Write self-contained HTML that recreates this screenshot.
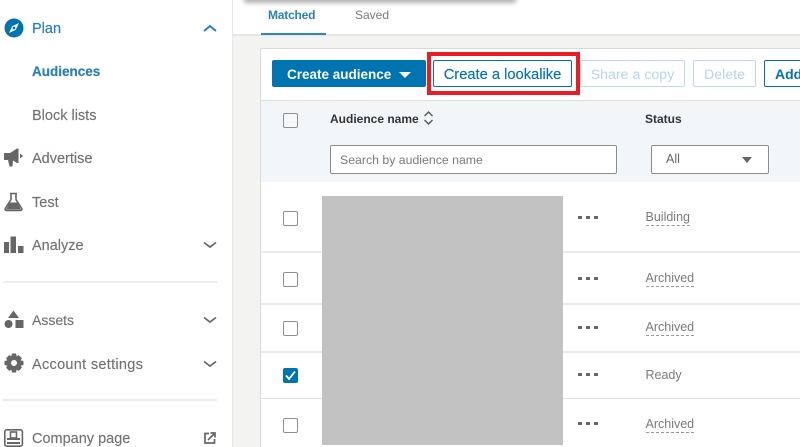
<!DOCTYPE html>
<html><head><meta charset="utf-8"><style>
html,body{margin:0;padding:0;width:800px;height:447px;overflow:hidden}
body{background:#f3f3f2;font-family:"Liberation Sans",sans-serif}
#p{position:absolute;left:0;top:0;width:800px;height:447px;overflow:hidden}
#p div,#p span,#p svg{position:absolute;white-space:nowrap}
.nav{left:32px;font-size:14.5px;line-height:20px;color:#737373;font-weight:400;-webkit-text-stroke:.15px #737373}
#p .blue{color:#2b80b9;-webkit-text-stroke:.2px #2b80b9}
.cb{left:283px;width:13px;height:13px;border:1.5px solid #8f8f8f;border-radius:2px;background:#fff}
.dots{left:578px;width:3.5px;height:3px;background:#666;box-shadow:8px 0 #666,16px 0 #666}
.st{left:645.5px;font-size:12.5px;line-height:16px;color:#7b7b7b;border-bottom:1px dashed #9a9a9a}
.rowline{left:261px;width:539px;height:1px;background:#ebebeb}
.btn{top:60px;height:27px;box-sizing:border-box;border:1px solid #0073b1;border-radius:2px;font-size:14.2px;line-height:28px;text-align:center;background:#fff;color:#0073b1}
.dis{border-color:#bcdcee;color:#b5d6e9}
.th{font-size:12px;font-weight:700;color:#333;line-height:16px}
.chev{left:203px;width:14px;height:8px}
</style></head><body><div id="p">
<div style="left:0;top:0;width:232px;height:447px;background:#fff;border-right:1px solid #e9e9e9"></div>
<div style="left:233px;top:0;width:567px;height:34px;background:#fff;border-bottom:2px solid #e6e6e6"></div>
<div style="left:246px;top:-6px;width:268px;height:6px;box-shadow:0 1px 5px 2px rgba(0,0,0,.3);background:#888"></div>

<!-- sidebar -->
<svg style="left:4px;top:18px" width="20" height="20" viewBox="0 0 20 20"><circle cx="10" cy="10" r="9.5" fill="#0073b1"/><path d="M15 5 L11.8 11.8 L5 15 L8.2 8.2Z" fill="#fff"/><circle cx="10" cy="10" r="1.4" fill="#0073b1"/></svg>
<div class="nav blue" style="top:19px">Plan</div>
<svg class="chev" style="top:24px" viewBox="0 0 14 8"><path d="M1 7 L7 2 L13 7" fill="none" stroke="#2b80b9" stroke-width="2"/></svg>
<div class="nav blue" style="top:62px;font-weight:700;font-size:13.5px">Audiences</div>
<div class="nav" style="top:106px">Block lists</div>

<svg style="left:4px;top:148px" width="20" height="20" viewBox="0 0 20 20"><path d="M0 5 H6 L13 0.5 H14.5 V15 H13 L9 12.5 L8.5 18.5 H5.5 L4 12 H0Z" fill="#666"/><path d="M16 5.5 L19 8 L16 10.5Z" fill="#666"/></svg>
<div class="nav" style="top:149px">Advertise</div>

<svg style="left:4px;top:192px" width="19" height="20" viewBox="0 0 19 20"><path d="M6 1.5 H13 M7 1.5 V7.5 L1.2 16.5 Q0.8 18.5 2.5 18.5 H16.5 Q18.2 18.5 17.8 16.5 L12 7.5 V1.5" fill="none" stroke="#666" stroke-width="1.6"/><path d="M5.5 10.5 H13.5 L17 17.5 H2Z" fill="#666"/></svg>
<div class="nav" style="top:193px">Test</div>

<svg style="left:4px;top:236px" width="20" height="18" viewBox="0 0 20 18"><rect x="0" y="6" width="5" height="11" fill="#666"/><rect x="6.5" y="0.5" width="5.5" height="16.5" fill="#666"/><rect x="14" y="10" width="5.5" height="7" fill="#666"/></svg>
<div class="nav" style="top:236px">Analyze</div>
<svg class="chev" style="top:241px" viewBox="0 0 14 8"><path d="M1 1.5 L7 6 L13 1.5" fill="none" stroke="#666" stroke-width="1.7"/></svg>

<div style="left:3px;top:281px;width:214px;height:2px;background:#ececec"></div>

<svg style="left:4px;top:310px" width="20" height="19" viewBox="0 0 20 19"><path d="M9.5 0.5 L15 8 H4Z" fill="#666"/><circle cx="4.5" cy="14" r="4" fill="#666"/><rect x="11.5" y="10" width="8" height="8" fill="#666"/></svg>
<div class="nav" style="top:310px;font-size:14px">Assets</div>
<svg class="chev" style="top:316px" viewBox="0 0 14 8"><path d="M1 1.5 L7 6 L13 1.5" fill="none" stroke="#666" stroke-width="1.7"/></svg>

<svg style="left:4px;top:353px" width="20" height="20" viewBox="0 0 20 20"><path d="M8 0.5 H12 L12.6 3.3 L14.8 2.1 L17.9 5.2 L16.7 7.4 L19.5 8 V12 L16.7 12.6 L17.9 14.8 L14.8 17.9 L12.6 16.7 L12 19.5 H8 L7.4 16.7 L5.2 17.9 L2.1 14.8 L3.3 12.6 L0.5 12 V8 L3.3 7.4 L2.1 5.2 L5.2 2.1 L7.4 3.3Z M10 7 A3 3 0 1 0 10 13 A3 3 0 1 0 10 7Z" fill="#666" fill-rule="evenodd"/></svg>
<div class="nav" style="top:355px;letter-spacing:.3px">Account settings</div>
<svg class="chev" style="top:360px" viewBox="0 0 14 8"><path d="M1 1.5 L7 6 L13 1.5" fill="none" stroke="#666" stroke-width="1.7"/></svg>

<div style="left:3px;top:399px;width:214px;height:2px;background:#ececec"></div>

<svg style="left:4px;top:429px" width="20" height="18" viewBox="0 0 20 18"><rect x="0.8" y="0.8" width="17.6" height="16.4" rx="2" fill="none" stroke="#666" stroke-width="1.6"/><rect x="6.5" y="3" width="6" height="6" fill="none" stroke="#666" stroke-width="1.6"/><rect x="3" y="9" width="13" height="2" fill="#666"/><rect x="3" y="13" width="13" height="2" fill="#666"/></svg>
<div class="nav" style="top:429px">Company page</div>
<svg style="left:204px;top:432px" width="12" height="12" viewBox="0 0 12 12"><path d="M5 1.5 H1 V11 H10.5 V7" fill="none" stroke="#666" stroke-width="1.7"/><path d="M4 8 L10 2 M6.5 1 H11 V5.5" fill="none" stroke="#666" stroke-width="1.7"/></svg>

<!-- tabs -->
<div style="left:268px;top:7px;font-size:12px;line-height:16px;color:#2b80b9;font-weight:700;letter-spacing:-.2px">Matched</div>
<div style="left:355px;top:7px;font-size:12px;line-height:16px;color:#7a7a7a">Saved</div>
<div style="left:261px;top:33px;width:65px;height:2px;background:#2f88bd"></div>

<!-- card -->
<div style="left:260px;top:48px;width:560px;height:399px;background:#fff;border:1px solid #d9d9d9;border-bottom:0;border-radius:2px 2px 0 0;box-sizing:border-box"></div>
<div style="left:261px;top:100px;width:539px;height:1px;background:#dfdfdf"></div>
<div style="left:261px;top:101px;width:539px;height:81px;background:#f3f6f8"></div>

<div class="btn" style="left:272px;width:154px;background:#0073b1;color:#fff;font-weight:700;font-size:13.5px;text-align:left;padding-left:14px;line-height:28px">Create audience</div>
<div style="left:399px;top:72px;width:0;height:0;border-left:6px solid transparent;border-right:6px solid transparent;border-top:6px solid #fff"></div>

<div style="left:427px;top:52px;width:153px;height:43px;box-sizing:border-box;border:4px solid #ed1c24"></div>
<div class="btn" style="left:433px;width:139px;font-size:14.7px;line-height:29px;-webkit-text-stroke:.15px #0073b1">Create a lookalike</div>
<div class="btn dis" style="left:580px;width:105px;line-height:29px">Share a copy</div>
<div class="btn dis" style="left:693px;width:63px;line-height:29px">Delete</div>
<div style="left:764px;top:60px;width:60px;height:27px;box-sizing:border-box;border:1px solid #0073b1;border-radius:2px;font-size:14px;line-height:27px;padding-left:10px;color:#0073b1;font-weight:700;background:#fff">Add</div>

<!-- header -->
<div class="cb" style="top:113px;background:#f7f8f9"></div>
<div class="th" style="left:330px;top:111px">Audience name</div>
<svg style="left:423px;top:110px" width="11" height="16" viewBox="0 0 11 16"><path d="M1.5 6 L5.5 2 L9.5 6 M1.5 10 L5.5 14 L9.5 10" fill="none" stroke="#555" stroke-width="1.4"/></svg>
<div class="th" style="left:645px;top:111px">Status</div>
<div style="left:330px;top:145px;width:287px;height:29px;box-sizing:border-box;background:#fff;border:1px solid #8c8c8c;border-radius:2px;font-size:12.3px;line-height:28px;padding-left:9px;color:#7a7a7a">Search by audience name</div>
<div style="left:651px;top:145px;width:118px;height:29px;box-sizing:border-box;background:#fff;border:1px solid #8c8c8c;border-radius:2px;font-size:12.5px;line-height:26px;padding-left:14px;color:#666">All</div>
<div style="left:742px;top:157px;width:0;height:0;border-left:5.5px solid transparent;border-right:5.5px solid transparent;border-top:6px solid #666"></div>

<!-- rows -->
<div class="rowline" style="top:251px;height:2px"></div>
<div class="rowline" style="top:303px;height:2px"></div>
<div class="rowline" style="top:351px;height:2px"></div>
<div class="rowline" style="top:398px;height:1px;background:#e3e3e3"></div>

<div style="left:322px;top:196px;width:241px;height:249px;background:#c2c2c2"></div>

<div class="cb" style="top:211px"></div>
<div class="cb" style="top:272px"></div>
<div class="cb" style="top:321px"></div>
<div style="left:283px;top:368px;width:15px;height:15px;background:#0073b1;border-radius:2px"></div>
<svg style="left:283px;top:368px" width="15" height="15" viewBox="0 0 15 15"><path d="M3 7.5 L6 11 L12 3.5" fill="none" stroke="#fff" stroke-width="1.8"/></svg>
<div class="cb" style="top:418px"></div>

<div class="dots" style="top:216px"></div>
<div class="dots" style="top:277px"></div>
<div class="dots" style="top:326px"></div>
<div class="dots" style="top:373px"></div>
<div class="dots" style="top:422px"></div>

<div class="st" style="top:209px">Building</div>
<div class="st" style="top:270px">Archived</div>
<div class="st" style="top:319px">Archived</div>
<div class="st" style="top:367px;border:0">Ready</div>
<div class="st" style="top:416px">Archived</div>
</div></body></html>
